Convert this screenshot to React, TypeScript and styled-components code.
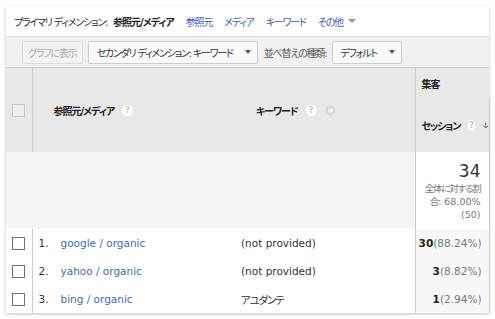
import React from 'react';
import styled, { createGlobalStyle } from 'styled-components';

const GlobalStyle = createGlobalStyle`
  html, body {
    margin: 0;
    padding: 0;
    background: #ffffff;
  }
  body {
    font-family: 'DejaVu Sans', 'Noto Sans CJK JP', sans-serif;
    font-size: 11px;
    color: #333333;
    font-feature-settings: 'palt';
  }
`;

const Card = styled.div`
  margin: 6px;
  width: 483px;
  background: #ffffff;
  box-shadow: 0 1px 3px rgba(0, 0, 0, 0.25);
`;

// japanese text in the reference is set in a narrow font, so tighten it
const Jp = styled.span`
  letter-spacing: -1.2px;
`;

const DimBar = styled.div`
  height: 30px;
  display: flex;
  align-items: center;
  padding-left: 8px;
  border-bottom: 1px solid #dddddd;
  font-size: 10px;
  letter-spacing: -1.2px;
`;

const DimLabel = styled.span`
  color: #333333;
  margin-right: 6px;
`;

const DimItem = styled.span<{ $active?: boolean }>`
  position: relative;
  margin-right: 12px;
  color: ${p => (p.$active ? '#222222' : '#3d5bc4')};
  font-weight: ${p => (p.$active ? 'bold' : 'normal')};
  letter-spacing: ${p => (p.$active ? '-1px' : 'inherit')};
  display: inline-flex;
  align-items: center;
  gap: 5px;

  ${p =>
    p.$active &&
    `
    &::before, &::after {
      content: '';
      position: absolute;
      left: 50%;
      margin-left: -5px;
      border: 5px solid transparent;
      border-top: 0;
    }
    &::before {
      top: 12px;
      border-bottom: 5px solid #dddddd;
    }
    &::after {
      top: 13px;
      border-bottom: 5px solid #f1f1f1;
    }
  `}
`;

const SmallCaret = styled.span`
  width: 0;
  height: 0;
  border-left: 4px solid transparent;
  border-right: 4px solid transparent;
  border-top: 4px solid #999999;
`;

const Toolbar = styled.div`
  height: 30px;
  display: flex;
  align-items: center;
  gap: 5px;
  padding-left: 16px;
  background: #f1f1f1;
  border-bottom: 1px solid #cccccc;
  font-size: 10px;
  letter-spacing: -1.2px;
`;

const Button = styled.div<{ $disabled?: boolean }>`
  height: 21px;
  display: inline-flex;
  align-items: center;
  gap: 10px;
  padding: 0 6px 0 ${p => (p.$disabled ? 5 : 7)}px;
  border: 1px solid ${p => (p.$disabled ? '#dddddd' : '#cccccc')};
  border-radius: 2px;
  background: ${p => (p.$disabled ? '#f3f3f3' : '#fafafa')};
  color: ${p => (p.$disabled ? '#aaaaaa' : '#333333')};
`;

const DropCaret = styled.span`
  width: 0;
  height: 0;
  border-left: 3.5px solid transparent;
  border-right: 3.5px solid transparent;
  border-top: 4px solid #555555;
  margin-left: 2px;
`;

const ToolLabel = styled.span`
  color: #555555;
  margin: 0 1px;
`;

const Table = styled.table`
  width: 483px;
  border-collapse: collapse;
  table-layout: fixed;
`;

const HeadCell = styled.th<{ $pad?: number; $right?: boolean }>`
  background: #e8e8e8;
  font-weight: bold;
  font-size: 10px;
  letter-spacing: -1px;
  color: #222222;
  text-align: left;
  padding: 0 0 0 ${p => p.$pad ?? 0}px;
  border-right: ${p => (p.$right ? '1px solid #cccccc' : 'none')};
  vertical-align: middle;
`;

const HeadInner = styled.div`
  display: flex;
  align-items: center;
  gap: 8px;
  white-space: nowrap;
`;

const GroupCell = styled.th`
  background: #e8e8e8;
  border-left: 1px solid #cccccc;
  font-weight: bold;
  font-size: 10px;
  letter-spacing: -1px;
  color: #222222;
  text-align: left;
  padding: 0 0 0 6px;
  height: 30px;
`;

const MetricCell = styled.th`
  background: #e8e8e8;
  border-left: 1px solid #cccccc;
  border-right: 1px solid #cccccc;
  font-weight: bold;
  font-size: 10px;
  letter-spacing: -1.2px;
  color: #222222;
  text-align: left;
  padding: 0 0 0 6px;
  height: 54px;
`;

const Help = styled.span`
  width: 11px;
  height: 11px;
  border-radius: 50%;
  background: #ffffff;
  color: #c4c4c4;
  font-size: 8px;
  font-weight: bold;
  letter-spacing: 0;
  display: inline-flex;
  align-items: center;
  justify-content: center;
  font-family: 'DejaVu Sans', sans-serif;
`;

const Checkbox = styled.span<{ $head?: boolean }>`
  display: block;
  width: 11px;
  height: 11px;
  margin: 0 auto;
  border: 1px solid ${p => (p.$head ? '#c8c8c8' : '#707070')};
  background: ${p => (p.$head ? '#eeeeee' : '#ffffff')};
`;

const SummaryCell = styled.td<{ $metric?: boolean }>`
  height: 67px;
  background: ${p => (p.$metric ? '#ffffff' : '#f5f5f5')};
  border-left: ${p => (p.$metric ? '1px solid #cccccc' : 'none')};
  border-right: ${p => (p.$metric ? '1px solid #cccccc' : 'none')};
  vertical-align: top;
  text-align: right;
  padding: 10px 8px 0 0;
`;

const CheckCell = styled.td`
  border-right: 1px solid #cccccc;
  background: #ffffff;
`;

const Total = styled.div`
  font-size: 17px;
  color: #333333;
  line-height: 18px;
`;

const TotalSub = styled.div`
  font-size: 9.5px;
  color: #777777;
  line-height: 13px;
  margin-top: 2px;
  white-space: nowrap;
`;

const Row = styled.tr`
  height: 28px;
`;

const Cell = styled.td<{ $pad?: number }>`
  padding: 0 0 0 ${p => p.$pad ?? 6}px;
  background: #ffffff;
  font-size: 10.5px;
  color: #333333;
  white-space: nowrap;
`;

const Rank = styled.span`
  display: inline-block;
  width: 22px;
  color: #333333;
`;

const Link = styled.span`
  color: #3c6db4;
`;

const ValueCell = styled.td`
  background: #f8f8f8;
  border-left: 1px solid #cccccc;
  border-right: 1px solid #cccccc;
  text-align: right;
  padding-right: 7px;
  font-size: 10.5px;
  white-space: nowrap;
`;

const Value = styled.b`
  color: #222222;
`;

const Pct = styled.span`
  color: #777777;
`;

const rows = [
  { source: 'google / organic', keyword: '(not provided)', value: '30', pct: '88.24%' },
  { source: 'yahoo / organic', keyword: '(not provided)', value: '3', pct: '8.82%' },
  { source: 'bing / organic', keyword: 'アユダンテ', value: '1', pct: '2.94%' },
];

const CompareIcon = () => (
  <svg width="11" height="11" viewBox="0 0 11 11">
    <circle cx="5.5" cy="5.5" r="5" fill="#d6d6d6" />
    <rect x="3" y="3.5" width="5" height="4" rx="0.5" fill="#eeeeee" />
  </svg>
);

const SortArrow = () => (
  <svg width="9" height="11" viewBox="0 0 9 11">
    <path d="M4.5 1 V9 M1 6 L4.5 9.5 L8 6" stroke="#666666" strokeWidth="1.6" fill="none" />
  </svg>
);

const isJp = (s: string) => /[\u3000-\u9fff]/.test(s);

export default function App() {
  return (
    <>
      <GlobalStyle />
      <Card>
        <DimBar>
          <DimLabel>プライマリ ディメンション:</DimLabel>
          <DimItem $active>参照元/メディア</DimItem>
          <DimItem>参照元</DimItem>
          <DimItem>メディア</DimItem>
          <DimItem>キーワード</DimItem>
          <DimItem>
            その他 <SmallCaret />
          </DimItem>
        </DimBar>
        <Toolbar>
          <Button $disabled>グラフに表示</Button>
          <Button>
            セカンダリ ディメンション: キーワード <DropCaret />
          </Button>
          <ToolLabel>並べ替えの種類:</ToolLabel>
          <Button>
            デフォルト <DropCaret />
          </Button>
        </Toolbar>
        <Table>
          <colgroup>
            <col style={{ width: 26 }} />
            <col style={{ width: 203 }} />
            <col style={{ width: 180 }} />
            <col style={{ width: 74 }} />
          </colgroup>
          <thead>
            <tr>
              <HeadCell rowSpan={2} $right>
                <Checkbox $head />
              </HeadCell>
              <HeadCell rowSpan={2} $pad={21}>
                <HeadInner>
                  参照元/メディア <Help>?</Help>
                </HeadInner>
              </HeadCell>
              <HeadCell rowSpan={2} $pad={21}>
                <HeadInner>
                  キーワード <Help>?</Help> <CompareIcon />
                </HeadInner>
              </HeadCell>
              <GroupCell>集客</GroupCell>
            </tr>
            <tr>
              <MetricCell>
                <HeadInner>
                  セッション <Help>?</Help> <SortArrow />
                </HeadInner>
              </MetricCell>
            </tr>
          </thead>
          <tbody>
            <tr>
              <SummaryCell />
              <SummaryCell />
              <SummaryCell />
              <SummaryCell $metric>
                <Total>34</Total>
                <TotalSub>
                  <Jp>全体に対する割</Jp>
                  <br />
                  <Jp>合</Jp>: 68.00%
                  <br />
                  (50)
                </TotalSub>
              </SummaryCell>
            </tr>
            {rows.map((r, i) => (
              <Row key={r.source}>
                <CheckCell>
                  <Checkbox />
                </CheckCell>
                <Cell>
                  <Rank>{i + 1}.</Rank>
                  <Link>{r.source}</Link>
                </Cell>
                <Cell>{isJp(r.keyword) ? <Jp>{r.keyword}</Jp> : r.keyword}</Cell>
                <ValueCell>
                  <Value>{r.value}</Value>
                  <Pct>({r.pct})</Pct>
                </ValueCell>
              </Row>
            ))}
          </tbody>
        </Table>
      </Card>
    </>
  );
}
